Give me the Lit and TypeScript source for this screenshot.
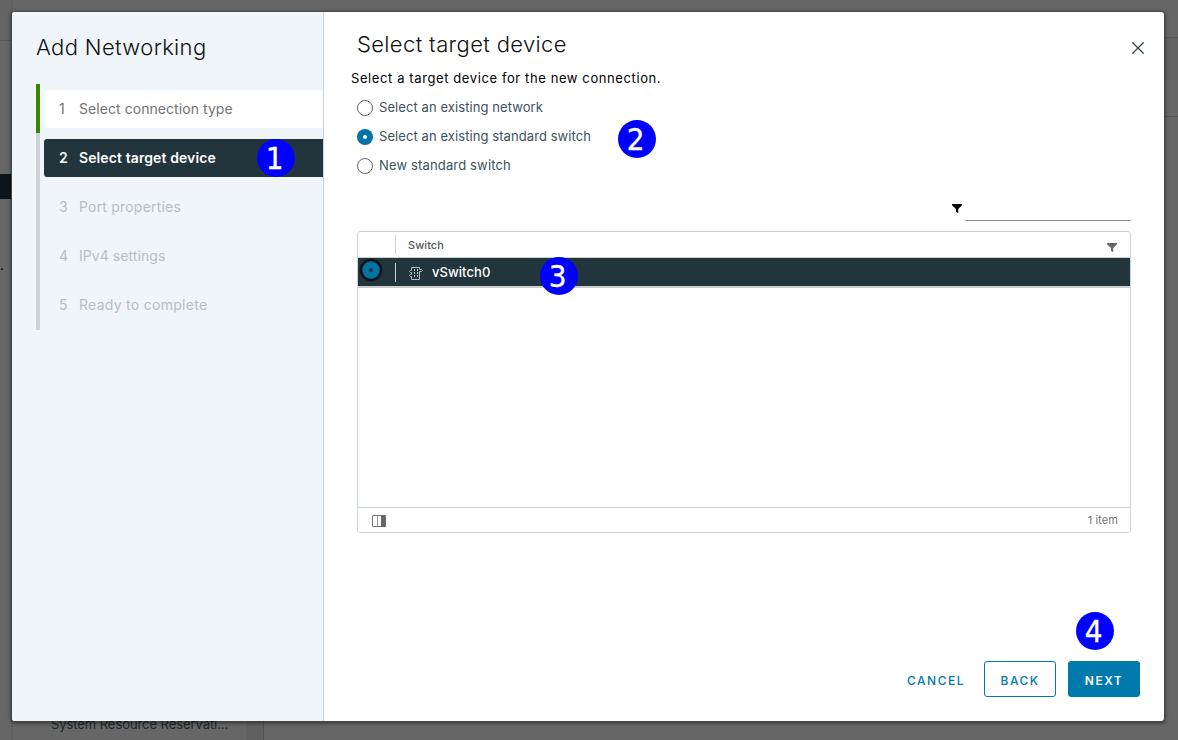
import { LitElement, html, css, svg } from "lit";
import { customElement, property } from "lit/decorators.js";
import { classMap } from "lit/directives/class-map.js";

const funnel = svg`<path d="M0 0h10v1.2L6.2 5v4L4 8V5L0 1.2z" fill="currentColor"/>`;

@customElement("page-behind")
class PageBehind extends LitElement {
  static styles = css`
    :host { display: grid; grid-template-columns: 11px 2px 233px 17px 1px 900px 14px; height: 740px; background: #666; font-family: Inter, sans-serif; }
    .rail { display: flex; flex-direction: column; color: #000; font-size: 13px; line-height: 12px; }
    .r1 { height: 40px; border-bottom: 1px solid #575757; background: #646464; }
    .r2 { height: 133px; }
    .r3 { height: 25px; background: #0c1519; }
    .r4 { margin-top: 60px; }
    .edge { background: #606060; }
    .tree { display: flex; align-items: flex-end; padding: 0 0 6px 38px; }
    .name { font-size: 13px; line-height: 20px; letter-spacing: -0.07px; color: #20282c; white-space: nowrap; }
    .scroll, .line { margin-top: 700px; }
    .scroll { background: #606060; }
    .line { background: #515151; }
    .right { display: flex; flex-direction: column; }
    .a { height: 37px; border-bottom: 1px solid #575757; }
    .b { height: 42px; background: #626262; }
    .c { height: 36px; border-bottom: 1px solid #575757; }
  `;
  render() {
    return html`
      <div class="rail"><div class="r1"></div><div class="r2"></div><div class="r3"></div><div class="r4">.</div></div>
      <div class="edge"></div>
      <div class="tree"><span class="name">System Resource Reservati...</span></div>
      <div class="scroll"></div><div class="line"></div><div></div>
      <div class="right"><div class="a"></div><div class="b"></div><div class="c"></div></div>`;
  }
}

@customElement("step-badge")
class StepBadge extends LitElement {
  @property() label = "";
  static styles = css`
    :host { display: flex; width: 38px; height: 38px; border-radius: 50%; background: #00f; color: #fff; justify-content: center; font: 31px/39px "DejaVu Sans Condensed", "DejaVu Sans", sans-serif; font-stretch: condensed; -webkit-text-stroke: 0.3px #fff; }
    span { margin-left: -3px; }
  `;
  render() { return html`<span>${this.label}</span>`; }
}

@customElement("wizard-nav")
class WizardNav extends LitElement {
  static styles = css`
    :host { display: block; box-sizing: border-box; width: 312px; background: #eff5f8; border-right: 1px solid #c9d3d9; border-radius: 3px 0 0 3px; padding-left: 24px; color: #111; }
    .title { margin: 0; height: 72px; box-sizing: border-box; padding-top: 21px; font-size: 22px; line-height: 29px; font-weight: 300; letter-spacing: 0.36px; white-space: nowrap; }
    .step { height: 49px; box-sizing: border-box; border-left: 4px solid #c9d3d9; padding: 6px 0 5px 4px; }
    .step:last-child { height: 50px; }
    .step.done { border-color: #3c8500; }
    .box { display: flex; height: 38px; align-items: center; border-radius: 3px 0 0 3px; box-sizing: border-box; padding-bottom: 2px; font-size: 14px; letter-spacing: 0.2px; color: #b6bec2; white-space: nowrap; }
    .num { width: 20px; padding-left: 15px; }
    .t1, .t4 { letter-spacing: 0.06px; }
    .t2 { letter-spacing: 0.1px; }
    .t5 { letter-spacing: 0.28px; }
    .done .box { background: #fff; color: #747474; border-radius: 3px; }
    .current .box { background: #22343c; color: #fff; font-weight: 600; }
  `;
  steps: [string, string][] = [
    ["Select connection type", "done"], ["Select target device", "current"],
    ["Port properties", ""], ["IPv4 settings", ""], ["Ready to complete", ""],
  ];
  render() {
    return html`<h1 class="title">Add Networking</h1>
      ${this.steps.map(([t, s], i) => html`<div class=${classMap({ step: true, done: s === "done", current: s === "current" })}>
        <div class="box"><span class="num">${i + 1}</span><span class="t${i + 1}">${t}</span></div></div>`)}`;
  }
}

@customElement("switch-grid")
class SwitchGrid extends LitElement {
  static styles = css`
    :host { display: flex; flex-direction: column; box-sizing: border-box; width: 774px; height: 302px; border: 1px solid #c9d3d9; border-radius: 3px; }
    .head { display: flex; align-items: center; height: 25px; border-bottom: 1px solid #c9d3d9; font-size: 11px; font-weight: 500; color: #565656; }
    .sep { width: 1px; height: 19px; margin-left: 37px; background: #c9d3d9; }
    .label { margin-left: 12px; flex: 1; letter-spacing: 0.06px; }
    .head svg { color: #666; margin: 6px 13px 0 0; }
    .row { display: flex; align-items: center; height: 28px; background: #22343c; border-bottom: 2px solid #ccc; color: #fff; font-size: 13px; font-weight: 500; }
    .dot { width: 24px; height: 24px; margin: -4px 0 0 1px; }
    .row .sep { margin-left: 12px; }
    .sw { margin: 2px 9px 0 13px; }
    .name { letter-spacing: 0.05px; }
    .body { flex: 1; }
    .foot { display: flex; align-items: center; justify-content: space-between; height: 24px; border-top: 1px solid #c9d3d9; padding: 0 12px 0 14px; font-size: 11px; color: #747474; }
    .foot svg { margin-top: 2px; }
    .count { letter-spacing: 0.1px; }
  `;
  render() {
    return html`
      <div class="head"><span class="sep"></span><span class="label">Switch</span>
        <svg width="10" height="9" viewBox="0 0 10 9">${funnel}</svg></div>
      <div class="row">
        <svg class="dot" viewBox="0 0 24 24"><circle cx="12" cy="12" r="10" fill="#0072a3" stroke="#101417" stroke-width="2.6"/><circle cx="12" cy="12" r="2" fill="#22343c"/></svg>
        <span class="sep"></span>
        <svg class="sw" width="14" height="14" viewBox="0 0 14 14" fill="none" stroke="#b4bcc0"><path d="M2.500 4V1.500h8V3M10.500 3.500h2l1 1-1 1h-2M10.500 5.500v8h-8v-3M2.500 6.500h-1l-1-1 1-1h1M2.500 10.500h-1l-1-1 1-1h1v-2"/><path d="M5.500 3v9M8.500 3v9" stroke-dasharray="2 1"/></svg>
        <span class="name">vSwitch0</span></div>
      <div class="body"></div>
      <div class="foot"><svg width="14" height="12" viewBox="0 0 14 12"><rect x=".5" y=".5" width="13" height="11" rx=".5" fill="none" stroke="#777"/><path d="M5.500 1v10" stroke="#999"/><path d="M9 0h4.500v12H9z" fill="#666"/></svg><span class="count">1 item</span></div>`;
  }
}

@customElement("app-root")
class AppRoot extends LitElement {
  static styles = css`
    :host { display: grid; position: relative; width: 1178px; height: 740px; overflow: hidden; font-family: Inter, "Open Sans", sans-serif; }
    page-behind, .modal { grid-area: 1 / 1; }
    .modal { display: flex; width: 1152px; height: 709px; margin: 12px; background: #fff; border-radius: 3px; box-shadow: 0 1px 3px 2px rgba(0,0,0,.35); z-index: 1; }
    .main { display: flex; flex-direction: column; width: 840px; }
    .top { display: flex; justify-content: space-between; height: 56px; box-sizing: border-box; padding: 18px 20px 0 33px; color: #111; }
    .title { margin: 0; font-size: 22px; line-height: 29px; font-weight: 300; letter-spacing: 0.36px; }
    .close { margin-top: 12px; }
    .intro { margin: 0 0 0 27px; font-size: 13px; line-height: 20px; letter-spacing: 0.6px; color: #000; }
    .options { display: flex; flex-direction: column; padding: 5px 0 0 33px; }
    .opt { display: flex; align-items: center; gap: 6px; height: 29px; font-size: 13px; letter-spacing: 0.08px; color: #3c525c; }
    .opt span { padding-bottom: 1px; }
    .o2 { letter-spacing: 0.15px; }
    .filter { display: flex; justify-content: flex-end; gap: 3px; margin-right: 33px; height: 51px; }
    .filter svg { margin-top: 23px; }
    .field { width: 166px; height: 41px; border-bottom: 1px solid #8c8c8c; box-sizing: border-box; }
    .filter svg { margin-top: 24px; }
    switch-grid { margin-left: 33px; }
    .actions { display: flex; justify-content: flex-end; gap: 12px; margin-top: 128px; padding-right: 24px; }
    .btn { box-sizing: border-box; width: 72px; height: 36px; border: 1px solid #0079ad; border-radius: 3px; background: #fff; color: #0079ad; font: 500 12px/34px Inter, sans-serif; letter-spacing: 1.5px; padding: 2px 0 0; text-align: center; }
    .cancel { border-color: transparent; width: 76px; margin-right: -2px; }
    .next { background: #0079ad; color: #fff; font-weight: 600; }
    step-badge { position: absolute; z-index: 2; }
    .b1 { left: 257px; top: 139px; } .b2 { left: 618px; top: 120px; }
    .b3 { left: 540px; top: 257px; } .b4 { left: 1076px; top: 612px; }
  `;
  options = ["Select an existing network", "Select an existing standard switch", "New standard switch"];
  render() {
    return html`
      <page-behind></page-behind>
      <div class="modal">
        <wizard-nav></wizard-nav>
        <div class="main">
          <div class="top"><h2 class="title">Select target device</h2>
            <svg class="close" width="12" height="12" viewBox="0 0 12 12" stroke="#314351" stroke-width="1.3"><path d="M.4.4l11.200 11.200M11.600.4L.4 11.600"/></svg></div>
          <p class="intro">Select a target device for the new connection.</p>
          <div class="options">${this.options.map((o, i) => html`<label class="opt">
            <svg width="16" height="16" viewBox="0 0 16 16">${i === 1
              ? svg`<circle cx="8" cy="8" r="8" fill="#0072a3"/><circle cx="8" cy="8" r="2" fill="#fff"/>`
              : svg`<circle cx="8" cy="8" r="7.5" fill="#fff" stroke="#666"/>`}</svg><span class="o${i}">${o}</span></label>`)}</div>
          <div class="filter"><svg width="10" height="9" viewBox="0 0 10 9">${funnel}</svg><div class="field"></div></div>
          <switch-grid></switch-grid>
          <div class="actions"><button class="btn cancel">CANCEL</button><button class="btn">BACK</button><button class="btn next">NEXT</button></div>
        </div>
      </div>
      <step-badge class="b1" label="1"></step-badge><step-badge class="b2" label="2"></step-badge>
      <step-badge class="b3" label="3"></step-badge><step-badge class="b4" label="4"></step-badge>`;
  }
}
